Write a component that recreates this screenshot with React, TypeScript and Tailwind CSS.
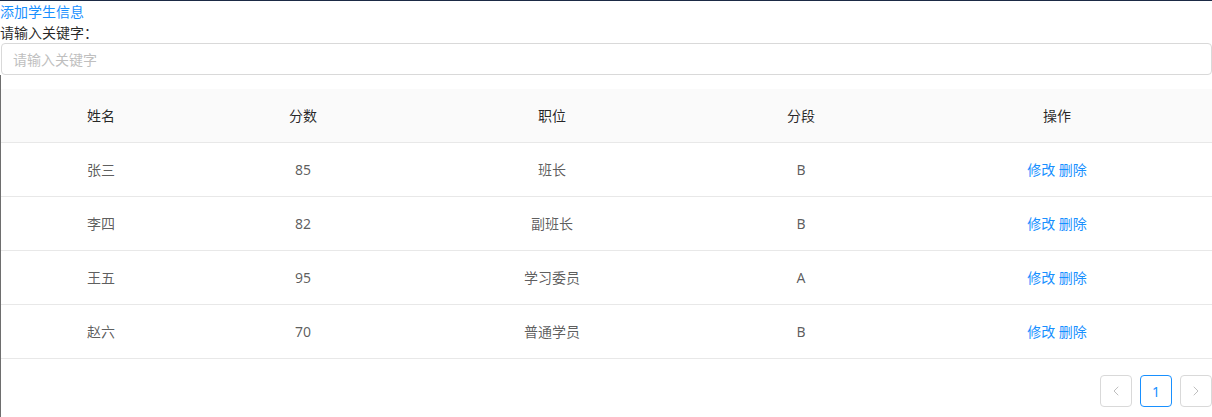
import { ChevronLeft, ChevronRight } from 'lucide-react';

const students = [
  { name: '张三', score: 85, role: '班长', grade: 'B' },
  { name: '李四', score: 82, role: '副班长', grade: 'B' },
  { name: '王五', score: 95, role: '学习委员', grade: 'A' },
  { name: '赵六', score: 70, role: '普通学员', grade: 'B' },
];

const cols = 'grid grid-cols-[202px_202px_296px_202px_1fr]';

export default function App() {
  return (
    <div
      className="relative w-[1212px] h-[417px] bg-white border-t border-[#1b2a45] text-sm leading-[21px] text-black/85 overflow-hidden"
      style={{ fontFamily: '"Noto Sans", "Noto Sans CJK SC", sans-serif' }}
    >
      {/* 左侧灰线 */}
      <div className="absolute left-0 top-[74px] bottom-0 w-px bg-[#6e6e6e]"></div>

      <a href="#" className="block text-[#1890ff]">添加学生信息</a>
      <div>请输入关键字：</div>
      <input
        placeholder="请输入关键字"
        className="block w-[1211px] h-8 ml-px px-[11px] border border-[#d9d9d9] rounded bg-white text-sm outline-none placeholder:text-[#bfbfbf]"
      />

      <div className="mt-[14px]">
        <div className={`${cols} h-[54px] items-center bg-[#fafafa] border-b border-[#e8e8e8] text-center`}>
          <div>姓名</div>
          <div>分数</div>
          <div>职位</div>
          <div>分段</div>
          <div>操作</div>
        </div>
        {students.map((s) => (
          <div key={s.name} className={`${cols} h-[54px] items-center border-b border-[#e8e8e8] text-center text-black/65`}>
            <div>{s.name}</div>
            <div>{s.score}</div>
            <div>{s.role}</div>
            <div>{s.grade}</div>
            <div className="text-[#1890ff]">
              <a href="#">修改</a> <a href="#">删除</a>
            </div>
          </div>
        ))}
      </div>

      <div className="flex justify-end gap-2 mt-4">
        <button className="w-8 h-8 flex items-center justify-center border border-[#d9d9d9] rounded text-black/25">
          <ChevronLeft className="w-4 h-4" strokeWidth={1.5} />
        </button>
        <button className="w-8 h-8 flex items-center justify-center border border-[#1890ff] rounded text-[#1890ff]">
          1
        </button>
        <button className="w-8 h-8 flex items-center justify-center border border-[#d9d9d9] rounded text-black/25">
          <ChevronRight className="w-4 h-4" strokeWidth={1.5} />
        </button>
      </div>
    </div>
  );
}
